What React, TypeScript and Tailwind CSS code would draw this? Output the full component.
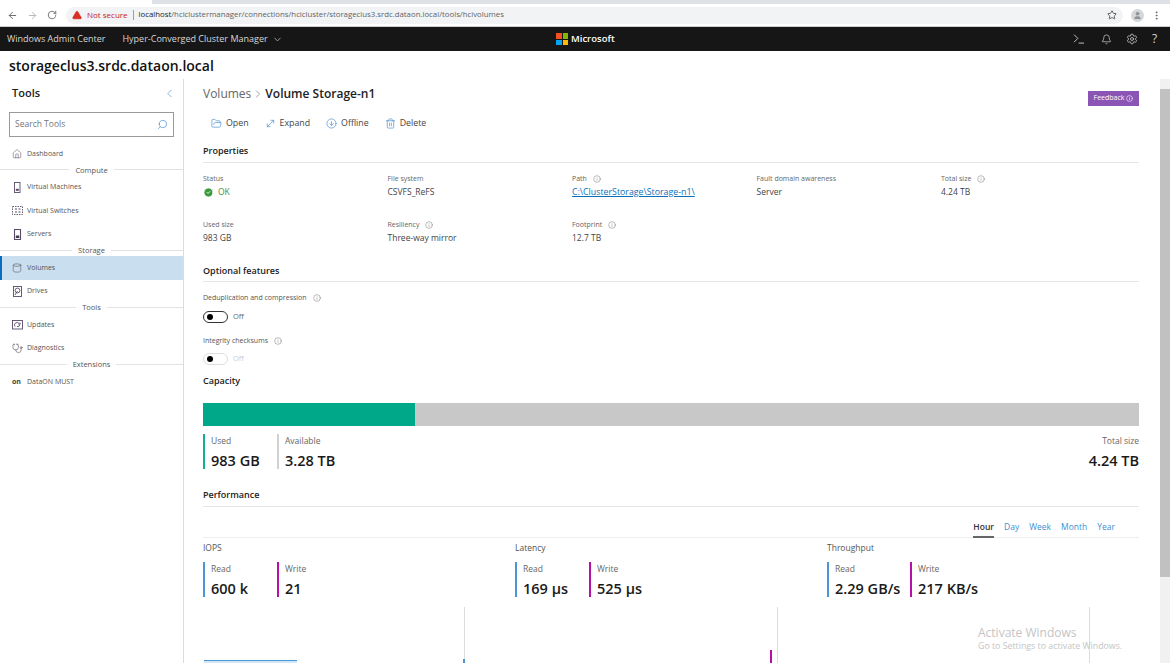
import { ArrowLeft, ArrowRight, RotateCw, TriangleAlert, Star, User, MoreVertical, ChevronDown, ChevronLeft, ChevronRight, Terminal, Bell, Settings, Search, Home, Cylinder, Stethoscope, FolderOpen, MoveDiagonal, ArrowDownCircle, Trash2, Info, CheckCircle2 } from 'lucide-react';
import type { ReactNode } from 'react';

const Box = ({ children }: { children: ReactNode }) => (
  <svg width="11" height="11" viewBox="0 0 11 11" fill="none" stroke="#5a4a68" strokeWidth="0.9">{children}</svg>
);

const VmIcon = () => <Box><rect x="2.5" y="0.5" width="5.5" height="10" /><rect x="3.8" y="6.8" width="3" height="2" fill="#5a4a68" stroke="none" /></Box>;
const SwitchIcon = () => <Box><rect x="0.5" y="1.5" width="10" height="8" strokeDasharray="1.5 1" /><path d="M3 4h2M6.5 4h2M3 7h2M6.5 7h2" strokeWidth="1.2" /></Box>;
const ServerIcon = () => <Box><rect x="2.5" y="0.5" width="6" height="10" strokeWidth="1.1" /><rect x="3.8" y="6.5" width="3.5" height="2.5" fill="#3d3d4d" stroke="none" /></Box>;
const DriveIcon = () => <Box><rect x="1.5" y="0.5" width="8" height="10" /><circle cx="5.5" cy="4.5" r="2.4" /><path d="M3 9l2.5-4" /></Box>;
const UpdateIcon = () => <Box><rect x="0.5" y="1.5" width="10" height="8.5" /><path d="M3 7.5a2.5 2.5 0 0 1 4-3M8 3.5v1.6H6.4M8 5.5a2.5 2.5 0 0 1-3 2" /></Box>;
const OnIcon = () => <span className="text-[7px] font-bold leading-none text-[#444]">on</span>;

const nav = [
  { label: 'Dashboard', icon: <Home size={10} strokeWidth={1.2} className="text-[#4b4453]" /> },
  { section: 'Compute' },
  { label: 'Virtual Machines', icon: <VmIcon /> },
  { label: 'Virtual Switches', icon: <SwitchIcon /> },
  { label: 'Servers', icon: <ServerIcon /> },
  { section: 'Storage' },
  { label: 'Volumes', icon: <Cylinder size={10} strokeWidth={1.2} className="text-[#4b4453]" />, active: true },
  { label: 'Drives', icon: <DriveIcon /> },
  { section: 'Tools' },
  { label: 'Updates', icon: <UpdateIcon /> },
  { label: 'Diagnostics', icon: <Stethoscope size={11} strokeWidth={1.2} className="text-[#4b4453]" /> },
  { section: 'Extensions' },
  { label: 'DataON MUST', icon: <OnIcon /> },
];

const Tip = () => <Info size={8} strokeWidth={1.5} className="text-[#777] ml-[6px]" />;

function Section({ title, tall }: { title: string; tall?: boolean }) {
  return <div className={`text-[9px] font-semibold leading-[12px] text-[#222] border-b border-[#e6e6e6] ${tall ? 'h-[18px]' : 'h-[17px]'}`}>{title}</div>;
}

function Prop({ label, value, tip, link }: { label: string; value: ReactNode; tip?: boolean; link?: boolean }) {
  return (
    <div className="h-[46px]">
      <div className="flex items-center text-[7px] leading-[10px] text-[#666]">{label}{tip && <Tip />}</div>
      <div className={`mt-[1px] text-[8.5px] leading-[14px] whitespace-nowrap ${link ? 'text-[#0b6fb8] underline text-[8.8px]' : 'text-[#444]'}`}>{value}</div>
    </div>
  );
}

function Metric({ label, value, color, width, right }: { label: string; value: string; color: string; width?: string; right?: boolean }) {
  return (
    <div className={`h-[35px] ${right ? 'text-right' : `border-l-[2px] pl-[6px] ${color}`} ${width ?? ''}`}>
      <div className="text-[8.5px] leading-[13px] text-[#666]">{label}</div>
      <div className="mt-[5px] text-[14.5px] font-semibold leading-[18px] text-[#1a1a1a] whitespace-nowrap">{value}</div>
    </div>
  );
}

function Perf({ title, read, write, readW }: { title: string; read: string; write: string; readW: string }) {
  return (
    <div className="w-[312px] shrink-0">
      <div className="text-[8.5px] leading-[12px] text-[#555]">{title}</div>
      <div className="mt-[8px] flex">
        <Metric label="Read" value={read} color="border-[#4a95d6]" width={readW} />
        <Metric label="Write" value={write} color="border-[#b80fa8]" />
      </div>
    </div>
  );
}

export default function App() {
  return (
    <div className="relative h-[663px] w-[1170px] overflow-hidden bg-white" style={{ fontFamily: '"Open Sans", "Noto Sans", sans-serif' }}>
      {/* browser chrome */}
      <div className="flex h-[4px] bg-[#dee1e6]"><div className="w-[152px] bg-white" /></div>
      <div className="flex h-[23px] items-center bg-white pl-[7px] pr-[8px] border-b border-[#cfcfcf]">
        <ArrowLeft size={11} strokeWidth={2} className="text-[#5f6368]" />
        <ArrowRight size={11} strokeWidth={2} className="ml-[9px] text-[#b4b6b9]" />
        <RotateCw size={10} strokeWidth={2} className="ml-[9px] text-[#5f6368]" />
        <div className="ml-[9px] flex h-[17px] flex-1 items-center rounded-full bg-[#f1f3f4] pl-[6px] pr-[6px]">
          <TriangleAlert size={10} fill="#d93025" stroke="#d93025" />
          <span className="ml-[5px] text-[8px] text-[#c5221f]">Not secure</span>
          <span className="mx-[5px] h-[10px] w-px bg-[#9aa0a6]" />
          <span className="text-[7.8px] text-[#5f6368]"><span className="text-[#202124]">localhost</span>/hciclustermanager/connections/hcicluster/storageclus3.srdc.dataon.local/tools/hcivolumes</span>
          <Star size={10} strokeWidth={2} className="ml-auto text-[#444]" />
        </div>
        <div className="ml-[8px] flex h-[13px] w-[13px] items-center justify-center rounded-full bg-[#d5d7da]"><User size={9} fill="#8f9296" stroke="#8f9296" /></div>
        <MoreVertical size={11} className="ml-[7px] text-[#5f6368]" />
      </div>

      {/* black header */}
      <div className="relative flex h-[24px] items-center bg-[#161616] pl-[7px] pr-[9px] text-[#d6d6d6]">
        <span className="text-[9px]">Windows Admin Center</span>
        <span className="ml-[17px] text-[9px]">Hyper-Converged Cluster Manager</span>
        <ChevronDown size={11} strokeWidth={1.5} className="ml-[4px]" />
        <div className="absolute left-[556px] top-[6px] flex items-center gap-[3px]">
          <div className="grid h-[12px] w-[12px] grid-cols-2 gap-px">
            <span className="bg-[#f25022]" /><span className="bg-[#7fba00]" /><span className="bg-[#00a4ef]" /><span className="bg-[#ffb900]" />
          </div>
          <span className="text-[9.5px] font-semibold text-white leading-[12px]">Microsoft</span>
        </div>
        <div className="ml-auto flex items-center">
          <Terminal size={14} strokeWidth={1.5} />
          <Bell size={11} strokeWidth={1.5} className="ml-[15px]" />
          <Settings size={12} strokeWidth={1.5} className="ml-[14px]" />
          <span className="ml-[14px] w-[9px] text-[12px] leading-none">?</span>
        </div>
      </div>

      <div className="flex h-[28px] items-center pl-[9px] text-[14px] font-semibold text-[#111]">storageclus3.srdc.dataon.local</div>

      <div className="flex h-[585px]">
        {/* sidebar */}
        <aside className="w-[184px] shrink-0 border-r border-[#dcdcdc]">
          <div className="flex h-[28px] items-center justify-between pl-[12px] pr-[7px]">
            <span className="text-[11px] font-semibold text-[#222]">Tools</span>
            <ChevronLeft size={13} strokeWidth={1.25} className="text-[#4a90d0]" />
          </div>
          <div className="mx-[9px] mt-[5px] flex h-[25px] items-center justify-between border border-[#9a9a9a] px-[5px]">
            <span className="text-[8.5px] text-[#777]">Search Tools</span>
            <Search size={11} strokeWidth={1.5} className="-scale-x-100 text-[#4a90d0]" />
          </div>
          <div className="mt-[5px]">
            {nav.map((n) =>
              n.section ? (
                <div key={n.section} className="-mt-[1px] mb-[1px] flex h-[10px] items-center gap-[6px]">
                  <span className="h-px flex-1 bg-[#e2e2e2]" />
                  <span className="text-[7.5px] leading-[10px] text-[#555]">{n.section}</span>
                  <span className="h-px flex-1 bg-[#e2e2e2]" />
                </div>
              ) : (
                <div key={n.label} className={`flex h-[23.5px] items-center text-[7px] text-[#555] ${n.active ? 'border-l-[2px] border-[#0a6cc0] bg-[#c9deef] pl-[10px]' : 'pl-[12px]'}`}>
                  <span className="flex w-[15px] items-center">{n.icon}</span>
                  {n.label}
                </div>
              ),
            )}
          </div>
        </aside>

        {/* main */}
        <main className="relative flex-1 overflow-hidden pl-[19px] pr-[31px]">
          <div className="flex h-[30px] items-center justify-between">
            <div className="flex items-center text-[12px] text-[#666]">
              Volumes
              <ChevronRight size={12} strokeWidth={1.25} className="mx-[1px]" />
              <span className="text-[12px] font-semibold text-[#222]">Volume Storage-n1</span>
            </div>
            <div className="mt-[8px] flex h-[15px] w-[51px] items-center justify-center gap-[2px] bg-[#8a55b4] text-[7px] text-white">Feedback <Info size={7} /></div>
          </div>

          <div className="mt-[3px] flex h-[23px] items-center gap-[16px] pl-[8px] text-[8.8px] text-[#444]">
            <span className="flex items-center gap-[4px]"><FolderOpen size={11} strokeWidth={1.5} className="text-[#4a90d0]" />Open</span>
            <span className="flex items-center gap-[4px]"><MoveDiagonal size={11} strokeWidth={1.5} className="text-[#4a90d0]" />Expand</span>
            <span className="flex items-center gap-[4px]"><ArrowDownCircle size={11} strokeWidth={1.5} className="text-[#4a90d0]" />Offline</span>
            <span className="flex items-center gap-[4px]"><Trash2 size={11} strokeWidth={1.5} className="text-[#4a90d0]" />Delete</span>
          </div>

          <div className="mt-[10px]"><Section title="Properties" tall /></div>
          <div className="mt-[11px] grid grid-cols-[184.5px_184.5px_184.5px_184.5px_1fr]">
            <Prop label="Status" value={<span className="flex items-center gap-[4px] text-[#3f8f3f]"><CheckCircle2 size={11} fill="#3c9a3c" stroke="#fff" />OK</span>} />
            <Prop label="File system" value="CSVFS_ReFS" />
            <Prop label="Path" tip link value="C:\ClusterStorage\Storage-n1\" />
            <Prop label="Fault domain awareness" value="Server" />
            <Prop label="Total size" tip value="4.24 TB" />
            <Prop label="Used size" value="983 GB" />
            <Prop label="Resiliency" tip value="Three-way mirror" />
            <Prop label="Footprint" tip value="12.7 TB" />
          </div>

          <div className="-mt-[1px]"><Section title="Optional features" /></div>
          <div className="mt-[11px] flex items-center text-[7px] leading-[10px] text-[#555]">Deduplication and compression<Tip /></div>
          <div className="mt-[8px] flex items-center gap-[5px]">
            <span className="flex h-[12px] w-[25px] items-center rounded-full border border-[#333] pl-[3px]"><span className="h-[6px] w-[6px] rounded-full bg-black" /></span>
            <span className="text-[7.5px] text-[#666]">Off</span>
          </div>
          <div className="mt-[13px] flex items-center text-[7px] leading-[10px] text-[#555]">Integrity checksums<Tip /></div>
          <div className="mt-[7px] flex items-center gap-[5px]">
            <span className="flex h-[12px] w-[25px] items-center rounded-full border border-[#ddd] pl-[3px]"><span className="h-[6px] w-[6px] rounded-full bg-black" /></span>
            <span className="text-[7.5px] text-[#ccc]">Off</span>
          </div>

          <div className="mt-[10px] text-[9px] font-semibold leading-[12px] text-[#222]">Capacity</div>
          <div className="mt-[16px] flex h-[23px]">
            <div className="w-[212px] bg-[#00a88a]" />
            <div className="flex-1 bg-[#c8c8c8]" />
          </div>
          <div className="mt-[8px] flex">
            <Metric label="Used" value="983 GB" color="border-[#14ad95]" width="w-[74px]" />
            <Metric label="Available" value="3.28 TB" color="border-[#d0d0d0]" />
            <div className="ml-auto"><Metric label="Total size" value="4.24 TB" color="" right /></div>
          </div>

          <div className="mt-[20px]"><Section title="Performance" tall /></div>
          <div className="flex h-[31px] items-end justify-end gap-[10px] border-b border-[#eeeeee] pr-[24px] text-[8.5px] text-[#3d8fd1]">
            <span className="-mb-px border-b-[2px] border-[#666] pb-[2px] font-semibold text-[#333]">Hour</span>
            <span className="pb-[3px]">Day</span><span className="pb-[3px]">Week</span><span className="pb-[3px]">Month</span><span className="pb-[3px]">Year</span>
          </div>
          <div className="mt-[4px] flex">
            <Perf title="IOPS" read="600 k" write="21" readW="w-[74px]" />
            <Perf title="Latency" read="169 µs" write="525 µs" readW="w-[74px]" />
            <Perf title="Throughput" read="2.29 GB/s" write="217 KB/s" readW="w-[83px]" />
          </div>
          <div className="mt-[10px] flex h-[60px]">
            <div className="relative w-[312px] shrink-0">
              <div className="h-full w-[262px] border-r border-[#dcdcdc]" />
              <div className="absolute left-[1px] top-[53px] h-[3px] w-[93px] border-t border-[#4a95d6] bg-[#d5e6f5]" />
              <div className="absolute left-[260px] top-[52px] h-[10px] w-[2px] bg-[#4a95d6]" />
            </div>
            <div className="relative w-[312px] shrink-0">
              <div className="h-full w-[263px] border-r border-[#dcdcdc]" />
              <div className="absolute left-[255px] top-[43px] h-[17px] w-[2px] bg-[#b80fa8]" />
            </div>
            <div className="w-[263px] shrink-0 border-r border-[#dcdcdc]" />
          </div>

          {/* scrollbar */}
          <div className="absolute right-0 top-0 h-full w-[10px] bg-[#f1f1f1]">
            <div className="mt-[10px] h-[488px] bg-[#c1c1c1]" />
          </div>
        </main>
      </div>

      {/* windows watermark */}
      <div className="pointer-events-none absolute left-[978px] top-[625px] text-[#c4c4c4]">
        <div className="text-[12px] leading-[15px]">Activate Windows</div>
        <div className="text-[8.8px] leading-[12px]">Go to Settings to activate Windows.</div>
      </div>
    </div>
  );
}
